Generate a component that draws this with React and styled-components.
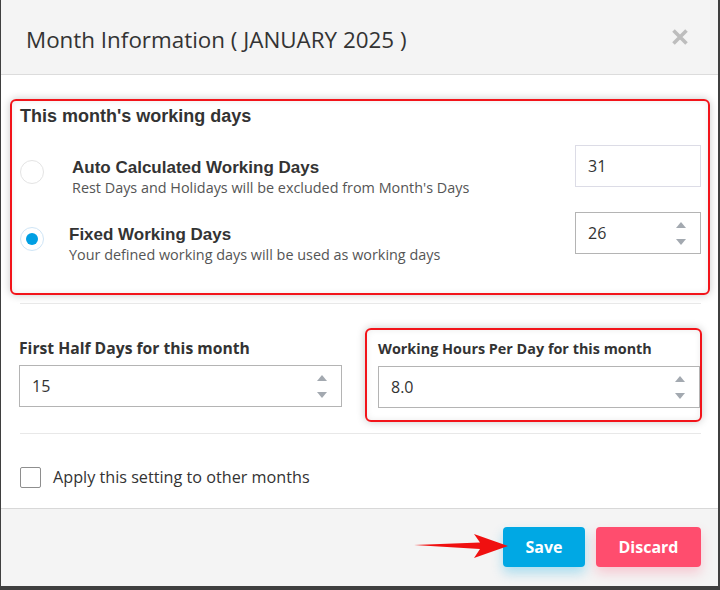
import React from 'react'
import styled, { createGlobalStyle } from 'styled-components'

const GlobalStyle = createGlobalStyle`
  html, body {
    margin: 0;
    padding: 0;
    background: #3f3f3f;
  }
  body {
    font-family: 'Open Sans', 'Liberation Sans', sans-serif;
    color: #333;
  }
`

const Page = styled.div`
  width: 720px;
  height: 590px;
  padding-left: 1px;
  box-sizing: border-box;
`

const Modal = styled.div`
  width: 717px;
  height: 586px;
  background: #fff;
  display: flex;
  flex-direction: column;
`

const Header = styled.div`
  height: 75px;
  flex-shrink: 0;
  background: #f4f4f4;
  border-bottom: 1px solid #dcdcdc;
  display: flex;
  align-items: center;
  justify-content: space-between;
  padding: 0 29px 0 25px;
  box-sizing: border-box;
`

const Title = styled.h2`
  margin: 0;
  font-size: 22.4px;
  font-weight: 400;
  color: #333;
  padding-top: 4px;
`

const Close = styled.button`
  border: 0;
  background: transparent;
  padding: 0;
  width: 18px;
  height: 18px;
  cursor: pointer;
`

const Body = styled.div`
  flex: 1;
  padding: 24px 17px 0 18px;
  box-sizing: border-box;
`

const Highlight = styled.div`
  border: 2px solid #f2141a;
  border-radius: 6px;
  box-shadow: 0 0 8px rgba(0, 0, 0, 0.22), inset 0 0 6px rgba(0, 0, 0, 0.08);
  box-sizing: border-box;
`

const DaysBox = styled(Highlight)`
  margin: 0 -9px;
  padding: 4px 7px 28px 8px;
`

const SectionTitle = styled.div`
  font-family: 'Liberation Sans', Arial, sans-serif;
  font-weight: 700;
  font-size: 18px;
  line-height: 22px;
  color: #333;
  margin-bottom: 18px;
`

const OptionRow = styled.div`
  display: flex;
  align-items: flex-start;
  & + & {
    margin-top: 14px;
  }
`

const Radio = styled.span`
  width: 24px;
  height: 24px;
  border-radius: 50%;
  box-sizing: border-box;
  border: 1px solid ${p => (p.checked ? '#cfe5f6' : '#e4e4e4')};
  margin-top: 15px;
  flex-shrink: 0;
  display: flex;
  align-items: center;
  justify-content: center;
  &::after {
    content: '';
    width: 12px;
    height: 12px;
    border-radius: 50%;
    background: ${p => (p.checked ? '#009fe3' : 'transparent')};
  }
`

const OptionText = styled.div`
  flex: 1;
  padding-top: 13px;
  margin-left: ${p => p.indent}px;
`

const OptionTitle = styled.div`
  font-family: 'Liberation Sans', Arial, sans-serif;
  font-weight: 700;
  font-size: 17px;
  line-height: 20px;
  color: #333;
`

const OptionHint = styled.div`
  font-size: 14.4px;
  line-height: 20px;
  color: #555;
`

const Field = styled.div`
  position: relative;
  width: ${p => p.width || '100%'};
  height: 42px;
  flex-shrink: 0;
  box-sizing: border-box;
  border: 1px solid ${p => (p.light ? '#dcdce6' : '#b4b4b4')};
  display: flex;
  align-items: center;
  padding: 0 12px;
  font-size: 16px;
  color: #333;
  background: #fff;
`

const Spinner = styled.div`
  position: absolute;
  right: 14px;
  top: 0;
  bottom: 0;
  display: flex;
  flex-direction: column;
  justify-content: center;
  gap: 11px;
`

const Divider = styled.div`
  height: 1px;
  background: #e8e8e8;
  margin: ${p => p.margin};
`

const HalfGrid = styled.div`
  display: grid;
  grid-template-columns: 323px 1fr;
  column-gap: 23px;
  align-items: start;
  margin-right: -1px;
`

const HalfCol = styled.div`
  padding-top: 9px;
`

const FieldLabel = styled.div`
  font-weight: 700;
  font-size: ${p => p.size}px;
  line-height: 22px;
  color: #333;
  margin-bottom: 6px;
`

const HoursBox = styled(Highlight)`
  padding: 8px 0 12px 11px;
  overflow: hidden;
`

const CheckRow = styled.label`
  display: flex;
  align-items: center;
  gap: 12px;
  margin-left: 1px;
  font-size: 16.2px;
  color: #333;
`

const CheckBox = styled.span`
  width: 21px;
  height: 21px;
  box-sizing: border-box;
  border: 1px solid #8e8e8e;
  border-radius: 2px;
  background: #fff;
`

const Footer = styled.div`
  position: relative;
  height: 78px;
  flex-shrink: 0;
  background: #f4f4f4;
  border-top: 1px solid #d8d8d8;
  box-sizing: border-box;
  display: flex;
  justify-content: flex-end;
  align-items: flex-start;
  gap: 11px;
  padding: 18px 17px 0 0;
`

const Button = styled.button`
  height: 40px;
  width: ${p => p.width}px;
  border: 0;
  border-radius: 4px;
  background: ${p => p.bg};
  color: #fff;
  font-family: 'Open Sans', sans-serif;
  font-weight: 700;
  font-size: 16px;
  box-shadow: 0 6px 12px ${p => p.shadow};
  cursor: pointer;
`

const Arrow = styled.svg`
  position: absolute;
  left: 413px;
  top: 24px;
`

const Caret = ({ up }) => (
  <svg width="10" height="6" viewBox="0 0 10 6">
    <path d={up ? 'M0 6 L5 0 L10 6 Z' : 'M0 0 L5 6 L10 0 Z'} fill="#a3a9b0" />
  </svg>
)

const NumberField = ({ value, width, light, spin }) => (
  <Field width={width} light={light}>
    {value}
    {spin && (
      <Spinner>
        <Caret up />
        <Caret />
      </Spinner>
    )}
  </Field>
)

const App = () => {
  return (
    <Page>
      <GlobalStyle />
      <Modal>
        <Header>
          <Title>Month Information ( JANUARY 2025 )</Title>
          <Close aria-label="close">
            <svg width="18" height="18" viewBox="0 0 18 18">
              <path d="M2.5 2.5 L15.5 15.5 M15.5 2.5 L2.5 15.5" stroke="#bdbdbd" strokeWidth="3.6" />
            </svg>
          </Close>
        </Header>

        <Body>
          <DaysBox>
            <SectionTitle>This month's working days</SectionTitle>
            <OptionRow>
              <Radio />
              <OptionText indent={28}>
                <OptionTitle>Auto Calculated Working Days</OptionTitle>
                <OptionHint>Rest Days and Holidays will be excluded from Month's Days</OptionHint>
              </OptionText>
              <NumberField value="31" width="126px" light />
            </OptionRow>
            <OptionRow>
              <Radio checked />
              <OptionText indent={25}>
                <OptionTitle>Fixed Working Days</OptionTitle>
                <OptionHint>Your defined working days will be used as working days</OptionHint>
              </OptionText>
              <NumberField value="26" width="126px" spin />
            </OptionRow>
          </DaysBox>

          <Divider margin="8px 0 24px 1px" />

          <HalfGrid>
            <HalfCol>
              <FieldLabel size={15.7}>First Half Days for this month</FieldLabel>
              <NumberField value="15" spin />
            </HalfCol>
            <HoursBox>
              <FieldLabel size={14.4}>Working Hours Per Day for this month</FieldLabel>
              <NumberField value="8.0" spin />
            </HoursBox>
          </HalfGrid>

          <Divider margin="11px 0 32px 1px" />

          <CheckRow>
            <CheckBox />
            Apply this setting to other months
          </CheckRow>
        </Body>

        <Footer>
          <Arrow width="94" height="26" viewBox="0 0 94 26">
            <path d="M0 12 L66 9.5 L60 1 L94 13 L60 25 L66 16 Z" fill="#f01010" />
          </Arrow>
          <Button width={82} bg="#00a8e4" shadow="rgba(0,168,228,0.3)">Save</Button>
          <Button width={105} bg="#ff4d6e" shadow="rgba(255,77,110,0.25)">Discard</Button>
        </Footer>
      </Modal>
    </Page>
  )
}

export default App
